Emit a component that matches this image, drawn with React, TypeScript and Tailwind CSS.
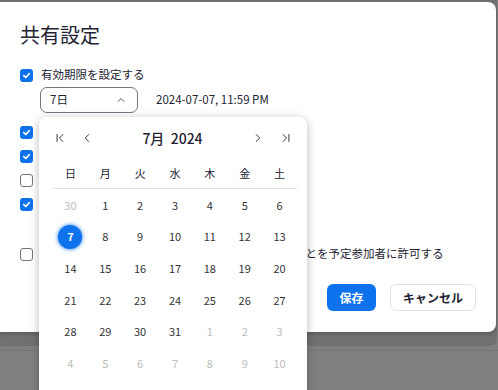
import React from "react";
import { ChevronUp, ChevronLeft, ChevronRight, ChevronFirst, ChevronLast } from "lucide-react";

const font = { fontFamily: '"Noto Sans CJK JP", "Noto Sans", sans-serif' };

function Check({ checked }: { checked: boolean }) {
  if (checked)
    return (
      <div className="w-[13px] h-[13px] rounded-[3px] bg-[#0e72ed] flex items-center justify-center shrink-0">
        <svg width="9" height="9" viewBox="0 0 10 10">
          <path d="M2 5.2 L4.2 7.2 L8 3" fill="none" stroke="white" strokeWidth="1.9" strokeLinecap="round" strokeLinejoin="round" />
        </svg>
      </div>
    );
  return <div className="w-[13px] h-[13px] rounded-[3px] border border-[#6e7680] bg-white shrink-0" />;
}

const weeks: [number, boolean][][] = [
  [[30, true], [1, false], [2, false], [3, false], [4, false], [5, false], [6, false]],
  [[7, false], [8, false], [9, false], [10, false], [11, false], [12, false], [13, false]],
  [[14, false], [15, false], [16, false], [17, false], [18, false], [19, false], [20, false]],
  [[21, false], [22, false], [23, false], [24, false], [25, false], [26, false], [27, false]],
  [[28, false], [29, false], [30, false], [31, false], [1, true], [2, true], [3, true]],
  [[4, true], [5, true], [6, true], [7, true], [8, true], [9, true], [10, true]],
];

export default function App() {
  return (
    <div className="w-[498px] h-[390px] bg-[#808080] relative overflow-hidden" style={font}>
      <div className="w-[497px] bg-[#717171] pt-[2px] pb-[14px] rounded-br-[8px]">
        <div className="w-[496px] h-[330px] bg-white rounded-r-[8px] shadow-[0_2px_4px_rgba(0,0,0,0.2)] pt-[19px] px-5 flex flex-col text-[#232333]">
          <div className="text-[20px] leading-[28px] font-normal">共有設定</div>
          <div className="mt-[15px] flex items-center gap-[8px] h-[22px]">
            <Check checked />
            <span className="text-[11.5px]">有効期限を設定する</span>
          </div>
          <div className="ml-[20px] mt-[1px] flex items-center gap-[18px]">
            <div className="w-[98px] h-[26px] border border-[#6e7680] rounded-[7px] flex items-center justify-between pl-[9px] pr-[10px]">
              <span className="text-[11.5px]">7日</span>
              <ChevronUp size={12} strokeWidth={1.6} className="text-[#333]" />
            </div>
            <span className="text-[11.5px]">2024-07-07, 11:59 PM</span>
          </div>
          <div className="mt-[7px] flex flex-col">
            {[true, true, false, true].map((c, i) => (
              <div key={i} className="h-[24px] flex items-center">
                <Check checked={c} />
              </div>
            ))}
          </div>
          <div className="mt-[26px] flex items-center gap-[8px] h-[24px]">
            <Check checked={false} />
            <span className="text-[11.5px] whitespace-nowrap">録画の閲覧者がクラウド録画をダウンロードするこ<span>とを予定参加者に許可する</span></span>
          </div>
          <div className="mt-[18px] flex justify-end gap-[14px]">
            <button className="w-[49px] h-[27px] rounded-[6px] bg-[#0e72ed] text-white text-[12px] font-bold">保存</button>
            <button className="w-[86px] h-[27px] rounded-[6px] bg-white border border-[#dfe3e8] text-[#232333] text-[12px] font-bold">キャンセル</button>
          </div>
        </div>
      </div>
      <div className="mt-[4px] h-px bg-[#747474]" />

      <div className="absolute left-[39px] top-[117px] w-[268px] h-[290px] bg-white rounded-t-[8px] shadow-[0_2px_10px_rgba(0,0,0,0.28)] text-[#232333]">
        <div className="h-[42px] flex items-center pl-[14px] pr-[14px]">
          <ChevronFirst size={14} strokeWidth={1.7} className="text-[#333]" />
          <ChevronLeft size={14} strokeWidth={1.7} className="text-[#333] ml-[13px]" />
          <div className="flex-1 text-center text-[14px] font-medium">7月&nbsp; 2024</div>
          <ChevronRight size={14} strokeWidth={1.7} className="text-[#333] mr-[14px]" />
          <ChevronLast size={14} strokeWidth={1.7} className="text-[#333]" />
        </div>
        <div className="ml-[14px] w-[244px]">
          <div className="grid grid-cols-7 h-[30px] items-center border-b border-[#dfe3e8]">
            {["日", "月", "火", "水", "木", "金", "土"].map((d) => (
              <div key={d} className="text-center text-[11px]">{d}</div>
            ))}
          </div>
          {weeks.map((w, i) => (
            <div key={i} className="grid grid-cols-7 h-[31.7px] items-center">
              {w.map(([d, muted], j) => {
                const sel = i === 1 && j === 0;
                return (
                  <div key={j} className="flex justify-center">
                    {sel ? (
                      <div className="w-[24px] h-[24px] rounded-full bg-[#0e72ed] text-white text-[11px] font-bold flex items-center justify-center shadow-[0_0_4px_#0e72ed]">
                        {d}
                      </div>
                    ) : (
                      <span className={"text-[11px] " + (muted ? "text-[#bdbdbd]" : "text-[#333]")}>{d}</span>
                    )}
                  </div>
                );
              })}
            </div>
          ))}
        </div>
      </div>
    </div>
  );
}
